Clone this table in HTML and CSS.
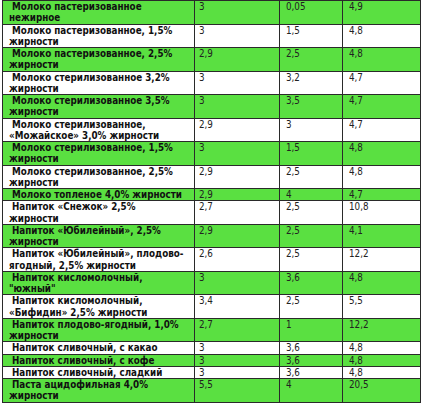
FILE: index.html
```html
<!DOCTYPE html>
<html lang="ru">
  <head>
    <meta charset="UTF-8" />
    <meta name="viewport" content="width=device-width, initial-scale=1.0" />
    <title>Молочные продукты</title>
    <link rel="stylesheet" href="styles.css">
  </head>
  <body>
    <table class="milk-table">
      <tr><td class="name">Молоко пастеризованное<br>нежирное</td><td class="c2">3</td><td>0,05</td><td>4,9</td></tr>
      <tr><td class="name">Молоко пастеризованное, 1,5%<br>жирности</td><td class="c2">3</td><td>1,5</td><td>4,8</td></tr>
      <tr><td class="name">Молоко пастеризованное, 2,5%<br>жирности</td><td class="c2">2,9</td><td>2,5</td><td>4,8</td></tr>
      <tr><td class="name">Молоко стерилизованное 3,2%<br>жирности</td><td class="c2">3</td><td>3,2</td><td>4,7</td></tr>
      <tr><td class="name">Молоко стерилизованное 3,5%<br>жирности</td><td class="c2">3</td><td>3,5</td><td>4,7</td></tr>
      <tr><td class="name">Молоко стерилизованное,<br>«Можайское» 3,0% жирности</td><td class="c2">2,9</td><td>3</td><td>4,7</td></tr>
      <tr><td class="name">Молоко стерилизованное, 1,5%<br>жирности</td><td class="c2">3</td><td>1,5</td><td>4,8</td></tr>
      <tr><td class="name">Молоко стерилизованное, 2,5%<br>жирности</td><td class="c2">2,9</td><td>2,5</td><td>4,8</td></tr>
      <tr><td class="name">Молоко топленое 4,0% жирности</td><td class="c2">2,9</td><td>4</td><td>4,7</td></tr>
      <tr><td class="name">Напиток «Снежок» 2,5%<br>жирности</td><td class="c2">2,7</td><td>2,5</td><td>10,8</td></tr>
      <tr><td class="name">Напиток «Юбилейный», 2,5%<br>жирности</td><td class="c2">2,9</td><td>2,5</td><td>4,1</td></tr>
      <tr><td class="name">Напиток «Юбилейный», плодово-<br>ягодный, 2,5% жирности</td><td class="c2">2,6</td><td>2,5</td><td>12,2</td></tr>
      <tr><td class="name">Напиток кисломолочный,<br>"южный"</td><td class="c2">3</td><td>3,6</td><td>4,8</td></tr>
      <tr><td class="name">Напиток кисломолочный,<br>«Бифидин» 2,5% жирности</td><td class="c2">3,4</td><td>2,5</td><td>5,5</td></tr>
      <tr><td class="name">Напиток плодово-ягодный, 1,0%<br>жирности</td><td class="c2">2,7</td><td>1</td><td>12,2</td></tr>
      <tr><td class="name">Напиток сливочный, с какао</td><td class="c2">3</td><td>3,6</td><td>4,8</td></tr>
      <tr><td class="name">Напиток сливочный, с кофе</td><td class="c2">3</td><td>3,6</td><td>4,8</td></tr>
      <tr><td class="name">Напиток сливочный, сладкий</td><td class="c2">3</td><td>3,6</td><td>4,8</td></tr>
      <tr><td class="name">Паста ацидофильная 4,0%<br>жирности</td><td class="c2">5,5</td><td>4</td><td>20,5</td></tr>
    </table>
  </body>
</html>
```

FILE: styles.css
```css
body {
  margin: 0;
  background: #fff;
  font-family: "DejaVu Sans Condensed", "DejaVu Sans", sans-serif;
  font-stretch: condensed;
  font-size: 9.75px;
  color: #222;
}
.milk-table {
  margin-left: 2px;
  width: 419px;
  border-collapse: collapse;
  table-layout: fixed;
}
.milk-table td {
  border: 1px solid #2a2a2a;
  padding: 0 2px 0 6px;
  line-height: 11.25px;
  vertical-align: top;
}
.milk-table tr:nth-child(odd) td {
  background-color: #5ae041;
}
.milk-table td:nth-child(1) {
  width: 183px;
}
.milk-table td:nth-child(3) {
  width: 54px;
}
.name {
  font-weight: bold;
  color: #111;
  text-indent: 3px;
}
.milk-table td.c2 {
  padding-left: 4px;
  width: 78px;
}
```
